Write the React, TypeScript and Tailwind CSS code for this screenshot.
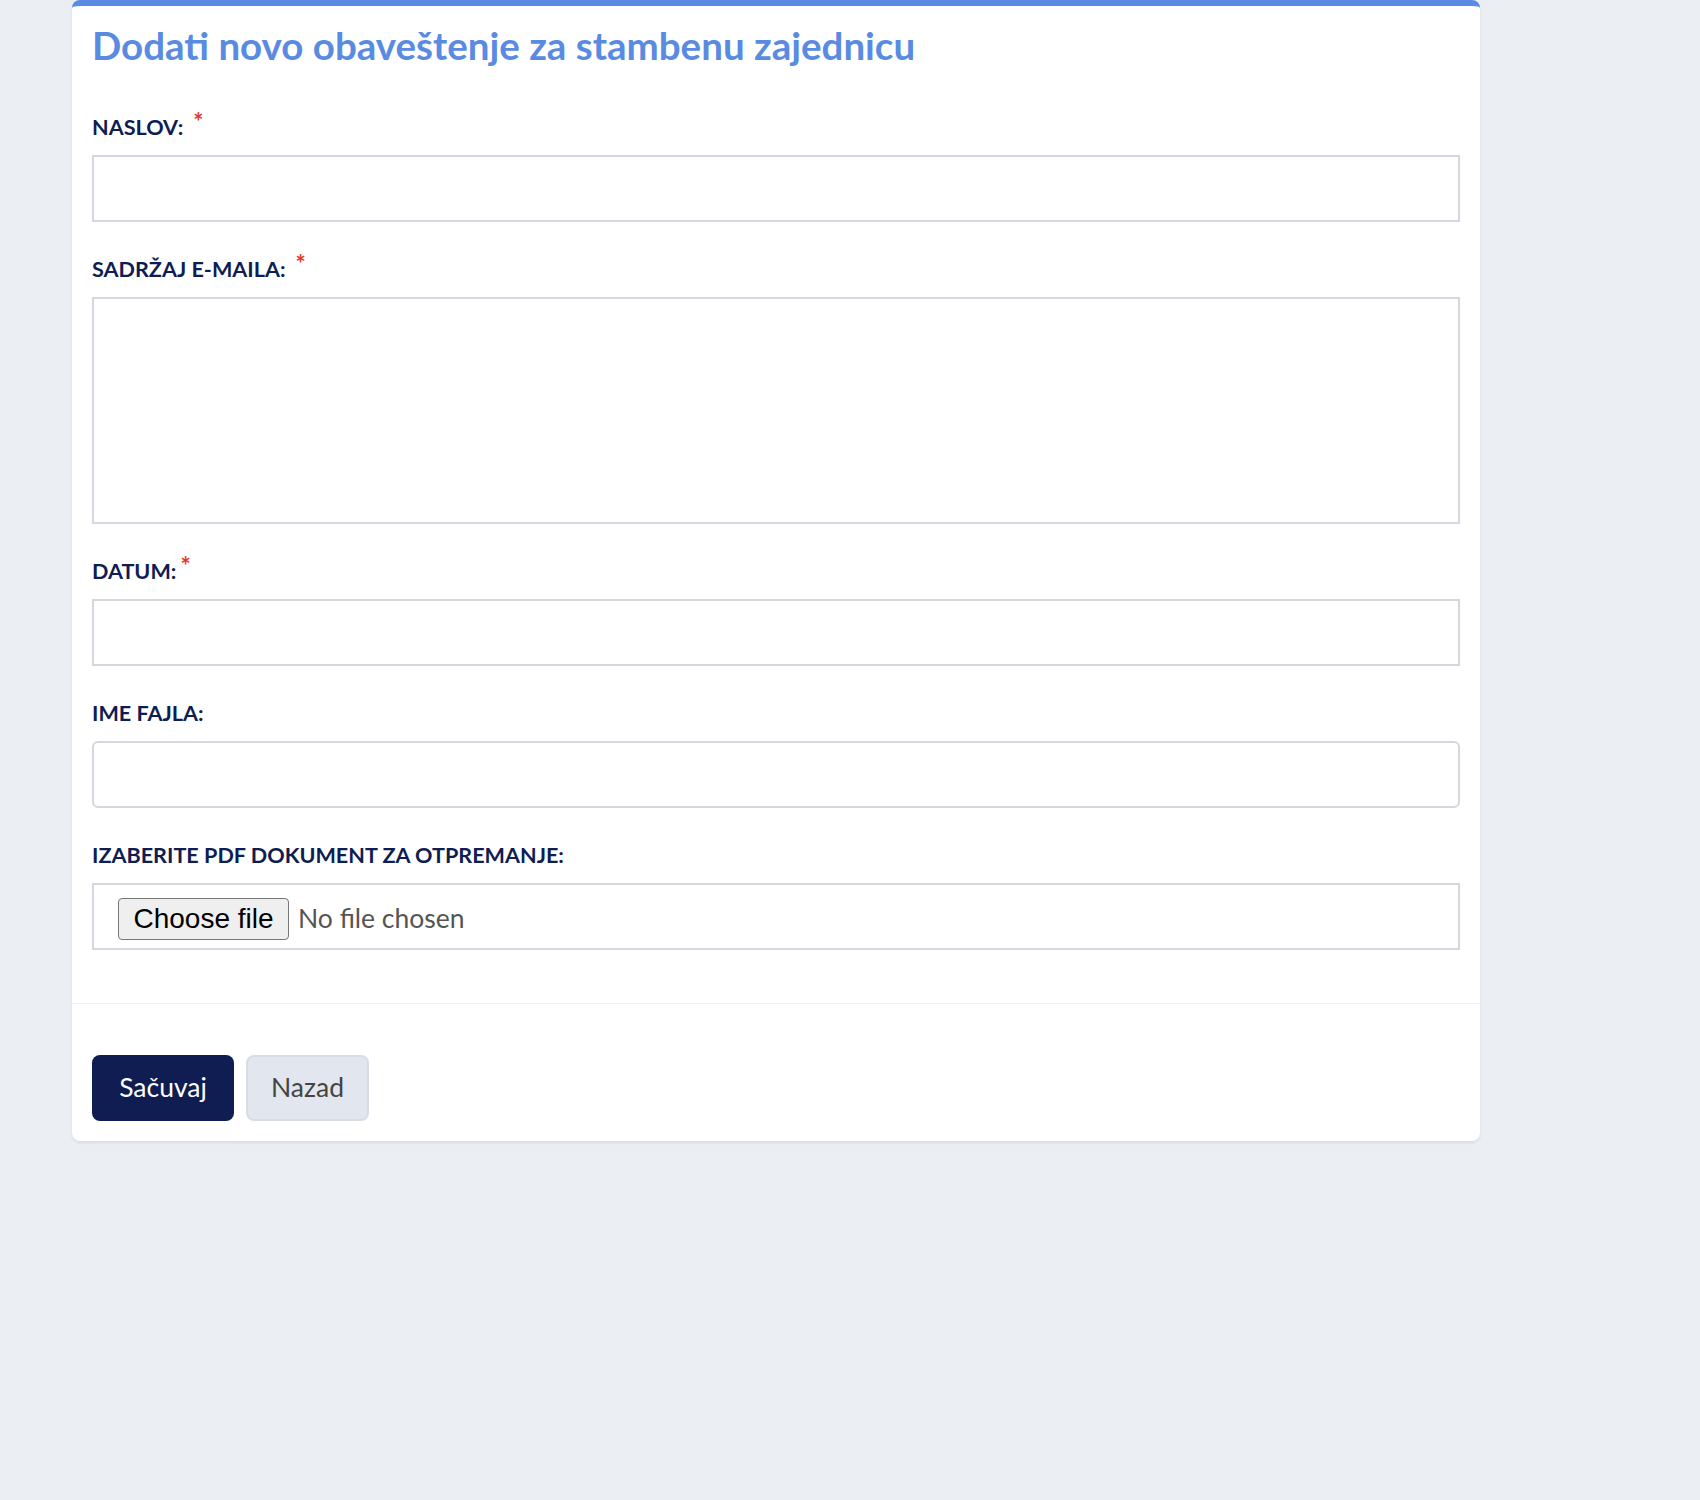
import { useState } from "react"

interface FieldProps {
  label: string
  required?: boolean
  starGap?: string
  children: React.ReactNode
  last?: boolean
}

function Field({ label, required, starGap = "ml-2.5", children, last }: FieldProps) {
  return (
    <div className={last ? "" : "mb-[34px]"}>
      <label className="block h-[26px] text-[21.6px] leading-[26px] font-bold text-[#0f1d52] uppercase">
        {label}
        {required && (
          <span className={`${starGap} text-[24px] font-bold leading-[0] text-[#e8352a] align-[4px]`}>*</span>
        )}
      </label>
      <div className="mt-[15px]">{children}</div>
    </div>
  )
}

export default function App() {
  const [title, setTitle] = useState("")
  const [body, setBody] = useState("")
  const [date, setDate] = useState("")
  const [fileName, setFileName] = useState("")
  const [pdf, setPdf] = useState<File | null>(null)

  const inputClass =
    "block w-full h-[67px] border-2 border-[#d4d7dd] bg-white px-4 text-[26px] text-[#333] outline-none focus:border-[#5a8be2]"

  return (
    <div className="min-h-screen bg-[#ebeef3] font-['Lato','Noto_Sans',sans-serif]">
      <div className="ml-[72px] w-[1408px] bg-white rounded-lg border-t-[6px] border-[#5a8be2] shadow-[0_2px_3px_rgba(0,0,0,0.08)]">
        {/* Form body */}
        <div className="px-5 pt-4 pb-[53px]">
          <h1 className="h-[46px] text-[38.5px] leading-[46px] font-bold text-[#5a8be2]">
            Dodati novo obaveštenje za stambenu zajednicu
          </h1>

          <div className="mt-[46px]">
            <Field label="Naslov:" required>
              <input
                type="text"
                value={title}
                onChange={e => setTitle(e.target.value)}
                className={inputClass}
              />
            </Field>

            <Field label="Sadržaj e-maila:" required>
              <textarea
                value={body}
                onChange={e => setBody(e.target.value)}
                className="block w-full h-[227px] resize-none border-2 border-[#d4d7dd] bg-white px-4 py-3 text-[26px] text-[#333] outline-none focus:border-[#5a8be2]"
              />
            </Field>

            <Field label="Datum:" required starGap="ml-1">
              <input
                type="text"
                value={date}
                onChange={e => setDate(e.target.value)}
                className={inputClass}
              />
            </Field>

            <Field label="Ime fajla:">
              <input
                type="text"
                value={fileName}
                onChange={e => setFileName(e.target.value)}
                className={`${inputClass} rounded-md`}
              />
            </Field>

            <Field label="Izaberite PDF dokument za otpremanje:" last>
              <label className="flex items-center h-[67px] border-2 border-[#d4d7dd] pl-[24px] pt-[4px] cursor-pointer">
                <input
                  type="file"
                  accept="application/pdf"
                  className="sr-only"
                  onChange={e => setPdf(e.target.files?.[0] ?? null)}
                />
                <span className="flex items-center justify-center h-[42px] w-[171px] rounded border border-[#767676] bg-[#efefef] font-['Liberation_Sans',Arial,sans-serif] text-[28px] text-black">
                  Choose file
                </span>
                <span className="ml-[9px] text-[26.5px] text-[#555]">
                  {pdf ? pdf.name : "No file chosen"}
                </span>
              </label>
            </Field>
          </div>
        </div>

        {/* Footer actions */}
        <div className="border-t border-[#f1f2f4] px-5 pt-[51px] pb-5 flex gap-3">
          <button className="h-[66px] w-[142px] rounded-lg bg-[#0f1d52] text-white text-[26.5px]">
            Sačuvaj
          </button>
          <button className="h-[66px] w-[123px] rounded-lg border-2 border-[#d8dce4] bg-[#e2e6ee] text-[#444] text-[26.5px]">
            Nazad
          </button>
        </div>
      </div>
    </div>
  )
}
